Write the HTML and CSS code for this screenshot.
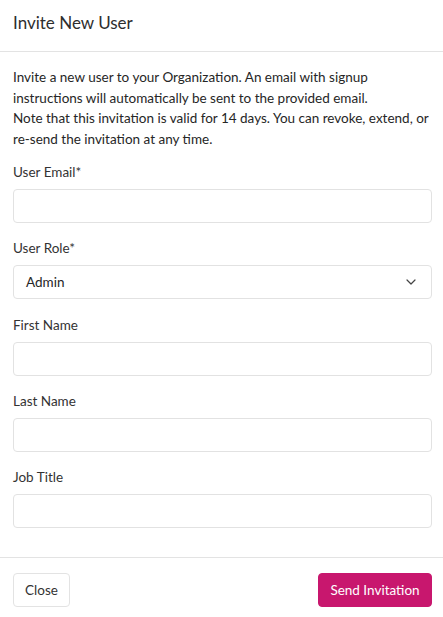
FILE: index.html
```html
<!DOCTYPE html>
<html lang="en">
<head>
<meta charset="utf-8">
<title>Invite New User</title>
<link rel="stylesheet" href="styles.css">
</head>
<body>
<div class="modal">
  <header class="modal-header">
    <h1 class="modal-title">Invite New User</h1>
  </header>
  <div class="modal-body">
    <p class="intro">Invite a new user to your Organization. An email with signup instructions will automatically be sent to the provided email.<br>Note that this invitation is valid for 14 days. You can revoke, extend, or re-send the invitation at any time.</p>
    <div class="field">
      <label class="label">User Email*</label>
      <div class="input"></div>
    </div>
    <div class="field">
      <label class="label">User Role*</label>
      <div class="input select">
        <span>Admin</span>
        <svg class="chev" width="10" height="6" viewBox="0 0 10 6"><path d="M1 1l4 4 4-4" fill="none" stroke="#444" stroke-width="1.2" stroke-linecap="round" stroke-linejoin="round"/></svg>
      </div>
    </div>
    <div class="field">
      <label class="label">First Name</label>
      <div class="input"></div>
    </div>
    <div class="field">
      <label class="label">Last Name</label>
      <div class="input"></div>
    </div>
    <div class="field">
      <label class="label">Job Title</label>
      <div class="input"></div>
    </div>
  </div>
  <footer class="modal-footer">
    <button class="btn btn-close">Close</button>
    <button class="btn btn-primary">Send Invitation</button>
  </footer>
</div>
</body>
</html>
```
FILE: styles.css
```css
* { box-sizing: border-box; }
body {
  margin: 0;
  background: #fff;
  font-family: Lato, "Open Sans", sans-serif;
  color: #2b2b2b;
}
.modal { width: 443px; }
.modal-header {
  height: 52px;
  padding: 12px 13px 0;
  border-bottom: 1px solid #e3e3e3;
}
.modal-title {
  margin: 0;
  font-size: 17px;
  line-height: 22px;
  font-weight: 400;
  color: #2e2e2e;
}
.modal-body {
  padding: 15px 11px 29px 13px;
}
.intro {
  margin: 0 0 14px;
  font-size: 13.5px;
  line-height: 20.5px;
  color: #262626;
}
.field { display: flex; flex-direction: column; gap: 8px; }
.field + .field { margin-top: 16.25px; }
.label {
  font-size: 13.5px;
  line-height: 18px;
  color: #333;
}
.input {
  height: 34px;
  border: 1px solid #e2e2e2;
  border-radius: 4px;
  background: #fff;
}
.select {
  display: flex;
  align-items: center;
  justify-content: space-between;
  padding: 0 12px 0 12px;
  font-size: 13.5px;
  color: #262626;
}
.chev { margin-right: 3px; }
.modal-footer {
  display: flex;
  justify-content: space-between;
  padding: 15px 11px 10px 13px;
  border-top: 1px solid #e3e3e3;
}
.btn {
  height: 34px;
  font-family: Lato, "Open Sans", sans-serif;
  font-size: 13.5px;
  border-radius: 4px;
  padding: 0;
  white-space: nowrap;
  text-align: center;
  cursor: pointer;
}
.btn-close {
  width: 57px;
  background: #fff;
  border: 1px solid #e3e3e3;
  color: #333;
}
.btn-primary {
  width: 114px;
  background: #c8176e;
  border: 1px solid #c8176e;
  color: #fff;
}
```
